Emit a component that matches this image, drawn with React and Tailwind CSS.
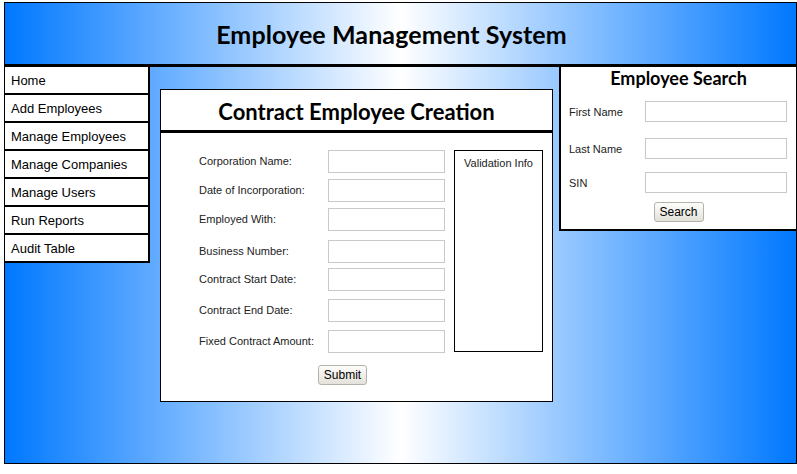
import React from 'react';

const navItems = ['Home', 'Add Employees', 'Manage Employees', 'Manage Companies', 'Manage Users', 'Run Reports', 'Audit Table'];

// spacing between rows is uneven in the original table, keep it
const formRows = [
  { label: 'Corporation Name:', gap: 'mt-0' },
  { label: 'Date of Incorporation:', gap: 'mt-[6px]' },
  { label: 'Employed With:', gap: 'mt-[6px]' },
  { label: 'Business Number:', gap: 'mt-[9px]' },
  { label: 'Contract Start Date:', gap: 'mt-[5px]' },
  { label: 'Contract End Date:', gap: 'mt-[8px]' },
  { label: 'Fixed Contract Amount:', gap: 'mt-[8px]' },
];

const searchRows = [
  { label: 'First Name', gap: 'mt-[12px]' },
  { label: 'Last Name', gap: 'mt-[16px]' },
  { label: 'SIN', gap: 'mt-[13px]' },
];

function OldButton({ children, className = '' }) {
  return (
    <button
      className={`h-[20px] rounded-[3px] border border-[#b4b3ab] bg-gradient-to-b from-[#fdfdfb] to-[#e3e1d9] text-[12px] text-black leading-none ${className}`}
    >
      {children}
    </button>
  );
}

export default function App() {
  return (
    <div className="w-[797px] h-[474px] bg-white font-['Liberation_Sans',Arial,sans-serif] pt-[2px] pl-[4px]">
      <div className="w-[793px] h-[462px] border border-black bg-[linear-gradient(to_right,#0078ff,#ffffff,#0078ff)] flex flex-col">
        {/* Header */}
        <div className="h-[64px] border-b-[3px] border-black flex items-center justify-center pr-[18px] pt-[2px]">
          <h1 className="font-['Lato',sans-serif] font-bold text-[25px] text-black tracking-[0.1px]">
            Employee Management System
          </h1>
        </div>

        <div className="flex items-start flex-1">
          {/* Left nav */}
          <nav className="w-[145px] bg-white border-r-2 border-black">
            {navItems.map((item) => (
              <div key={item} className="h-[28px] border-b-2 border-black pl-[6px] pt-[2px] flex items-center text-[13px] text-black">
                {item}
              </div>
            ))}
          </nav>

          {/* Contract employee form */}
          <div className="ml-[10px] mt-[22px] w-[393px] bg-white border border-black">
            <div className="h-[43px] border-b-[3px] border-black flex items-center justify-center pt-[3px]">
              <h2 className="font-['Lato',sans-serif] font-bold text-[22px] text-black">Contract Employee Creation</h2>
            </div>
            <div className="pt-[17px] pl-[38px] flex">
              <div className="w-[246px]">
                {formRows.map((row) => (
                  <div key={row.label} className={`flex items-center ${row.gap}`}>
                    <span className="w-[129px] text-[11px] text-[#222]">{row.label}</span>
                    <input className="w-[117px] h-[23px] border border-[#c9c9c9] bg-white" />
                  </div>
                ))}
              </div>
              <div className="ml-[9px] w-[89px] h-[202px] border border-black text-center text-[11px] text-[#222] pt-[4px]">
                Validation Info
              </div>
            </div>
            <div className="flex pt-[12px] pb-[16px] pl-[157px]">
              <OldButton className="w-[49px]">Submit</OldButton>
            </div>
          </div>

          {/* Employee search */}
          <div className="ml-[6px] flex-1 h-[164px] bg-white border-l-2 border-b-2 border-black">
            <h3 className="font-['Lato',sans-serif] font-bold text-[18px] leading-[22px] text-center text-black">
              Employee Search
            </h3>
            <div className="pl-[8px]">
              {searchRows.map((row) => (
                <div key={row.label} className={`flex items-center ${row.gap}`}>
                  <span className="w-[76px] text-[11px] text-[#222] pt-[1px]">{row.label}</span>
                  <input className="w-[142px] h-[21px] border border-[#c9c9c9] bg-white" />
                </div>
              ))}
            </div>
            <div className="mt-[9px] flex justify-center">
              <OldButton className="w-[50px]">Search</OldButton>
            </div>
          </div>
        </div>
      </div>
    </div>
  );
}
